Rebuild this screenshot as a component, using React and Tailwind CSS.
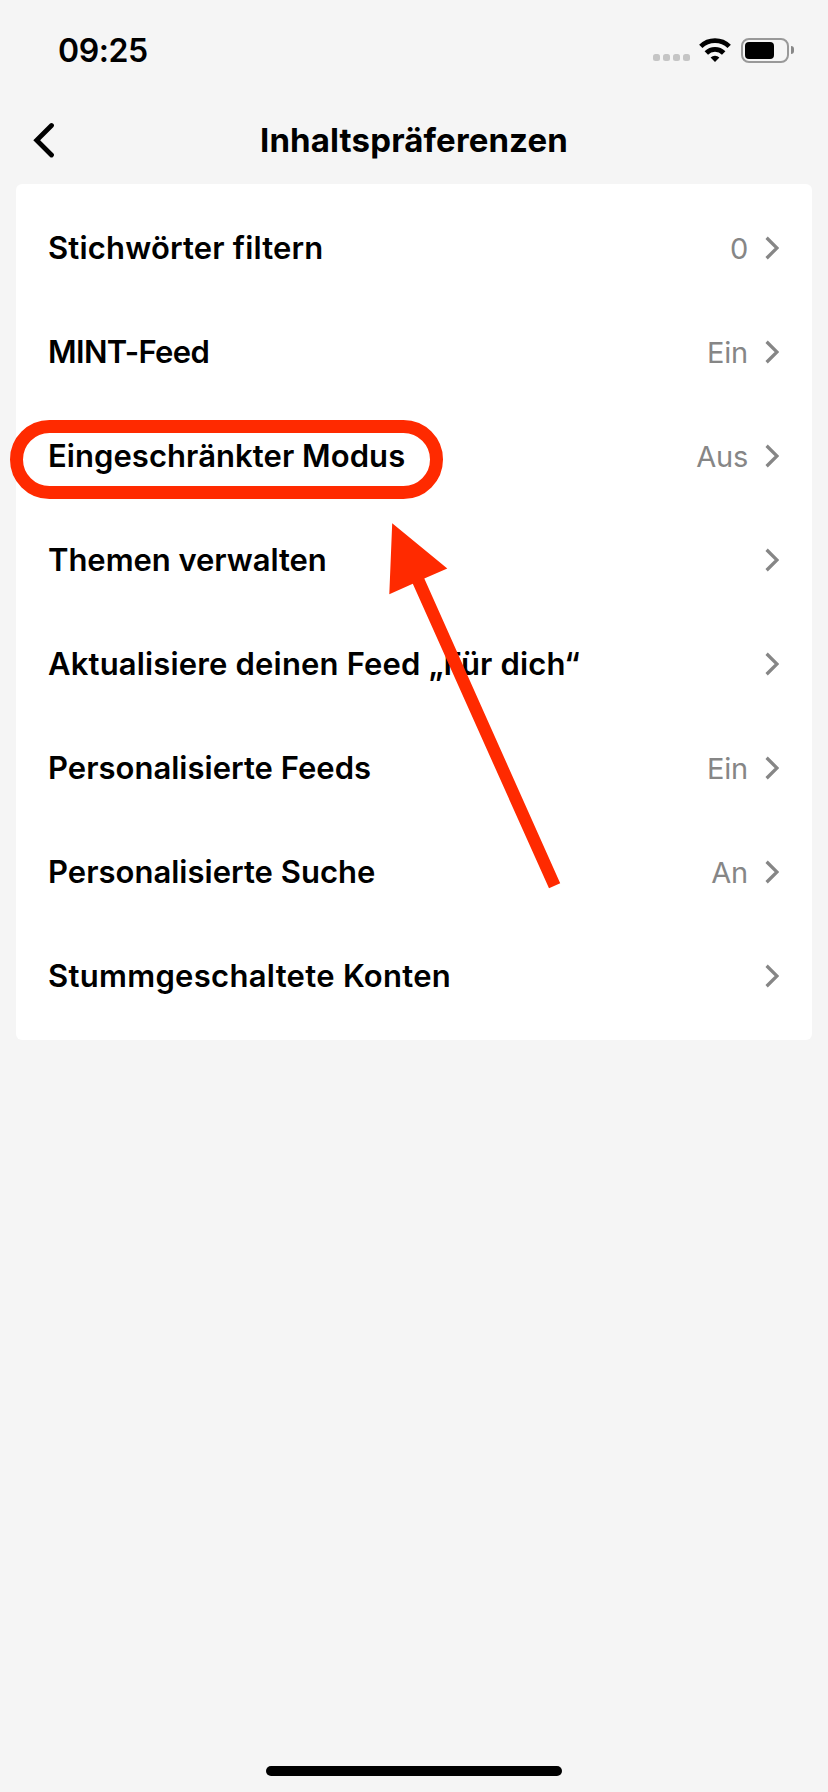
import React from 'react';

const items = [
  { label: 'Stichwörter filtern', value: '0', tracking: 'tracking-[0.18px]' },
  { label: 'MINT-Feed', value: 'Ein', tracking: 'tracking-[-0.65px]' },
  { label: 'Eingeschränkter Modus', value: 'Aus', tracking: 'tracking-[0.06px]', highlighted: true },
  { label: 'Themen verwalten', tracking: 'tracking-[-0.05px]' },
  { label: 'Aktualisiere deinen Feed „Für dich“', tracking: 'tracking-[0.17px]' },
  { label: 'Personalisierte Feeds', value: 'Ein', tracking: 'tracking-[0.02px]' },
  { label: 'Personalisierte Suche', value: 'An', tracking: 'tracking-[0.02px]' },
  { label: 'Stummgeschaltete Konten', tracking: 'tracking-[0.3px]' }
];

const SignalDots = () => (
  <div className="flex gap-[3px] pt-[15px]">
    {[0, 1, 2, 3].map((dot) => (
      <span key={dot} className="size-[7px] rounded-[2.5px] bg-[#c5c5c5]" />
    ))}
  </div>
);

const WifiIcon = () => (
  <svg className="w-8 h-6" viewBox="0 0 32 24" fill="none" stroke="#000" strokeWidth="4.8">
    <path d="M1.8 8.4 A20.3 20.3 0 0 1 30.2 8.4" />
    <path d="M7.3 15 A12.2 12.2 0 0 1 24.7 15" />
    <path d="M11.6 19.4 A6.4 6.4 0 0 1 20.4 19.4 L16 23.9 Z" fill="#000" stroke="none" />
  </svg>
);

const Battery = () => (
  <div className="flex items-center gap-[2px]">
    <div className="w-12 h-[25px] rounded-[8px] border-2 border-[#999] p-[2px]">
      <div className="w-[29px] h-full rounded-[4px] bg-black" />
    </div>
    <div className="w-[3px] h-2 rounded-r-full bg-[#888]" />
  </div>
);

const StatusBar = () => (
  <div className="h-[100px] flex items-center justify-between pl-[58px] pr-[34px]">
    <span className="pt-px text-[32px] font-semibold leading-none tracking-[-0.4px]">09:25</span>
    <div className="flex items-center">
      <SignalDots />
      <div className="ml-[9px] mr-[10px]">
        <WifiIcon />
      </div>
      <Battery />
    </div>
  </div>
);

const Header = () => (
  <header className="relative h-[84px] flex items-center justify-center">
    <button className="absolute left-[32px] top-[22px]" aria-label="Zurück">
      <svg className="w-6 h-9" viewBox="0 0 24 36" fill="none" stroke="#000" strokeWidth="4.8" strokeLinecap="round">
        <path d="M19.5 3.5 L4.7 18.2 L19.5 33" />
      </svg>
    </button>
    <h1 className="pb-1 text-[33px] font-bold leading-none tracking-[0.13px]">Inhaltspräferenzen</h1>
  </header>
);

const Row = ({ label, value, tracking, highlighted }) => (
  <li className="relative h-[104px] flex items-center pl-8 pr-[33px]">
    <span className={`flex-1 pb-0.5 whitespace-nowrap text-[31px] font-semibold leading-none ${tracking}`}>{label}</span>
    {value && <span className="text-[29px] leading-none tracking-[-0.2px] text-[#868686]">{value}</span>}
    <svg className="ml-[17px] w-[14px] h-6" viewBox="0 0 14 24" fill="none" stroke="#868686" strokeWidth="3.3">
      <path d="M1.6 1.8 L12 12 L1.6 22.2" />
    </svg>
    {highlighted && (
      <div className="absolute -left-[6px] top-[16px] w-[433px] h-[79px] rounded-full border-[13px] border-[#ff2a00]" />
    )}
  </li>
);

const Arrow = () => (
  <svg className="absolute left-[373px] top-[339px] w-[172px] h-[366px]" viewBox="389 523 172 366" fill="#ff2a00">
    <path d="M392.2 523.2 L447.3 568.4 L424.3 578.6 L560.2 883.2 L549 888.3 L412.8 583.8 L389.3 594.3 Z" />
  </svg>
);

const App = () => {
  return (
    <div className="h-[1792px] w-full flex flex-col overflow-hidden bg-[#f5f5f5] font-['Inter',sans-serif] text-black">
      <StatusBar />
      <Header />
      <main className="relative mx-4 rounded-[6px] bg-white py-3">
        <ul>
          {items.map((item) => (
            <Row key={item.label} {...item} />
          ))}
        </ul>
        <Arrow />
      </main>
      <div className="mt-auto mb-4 mx-auto w-[296px] h-[10px] rounded-full bg-black" />
    </div>
  );
};

export default App;
